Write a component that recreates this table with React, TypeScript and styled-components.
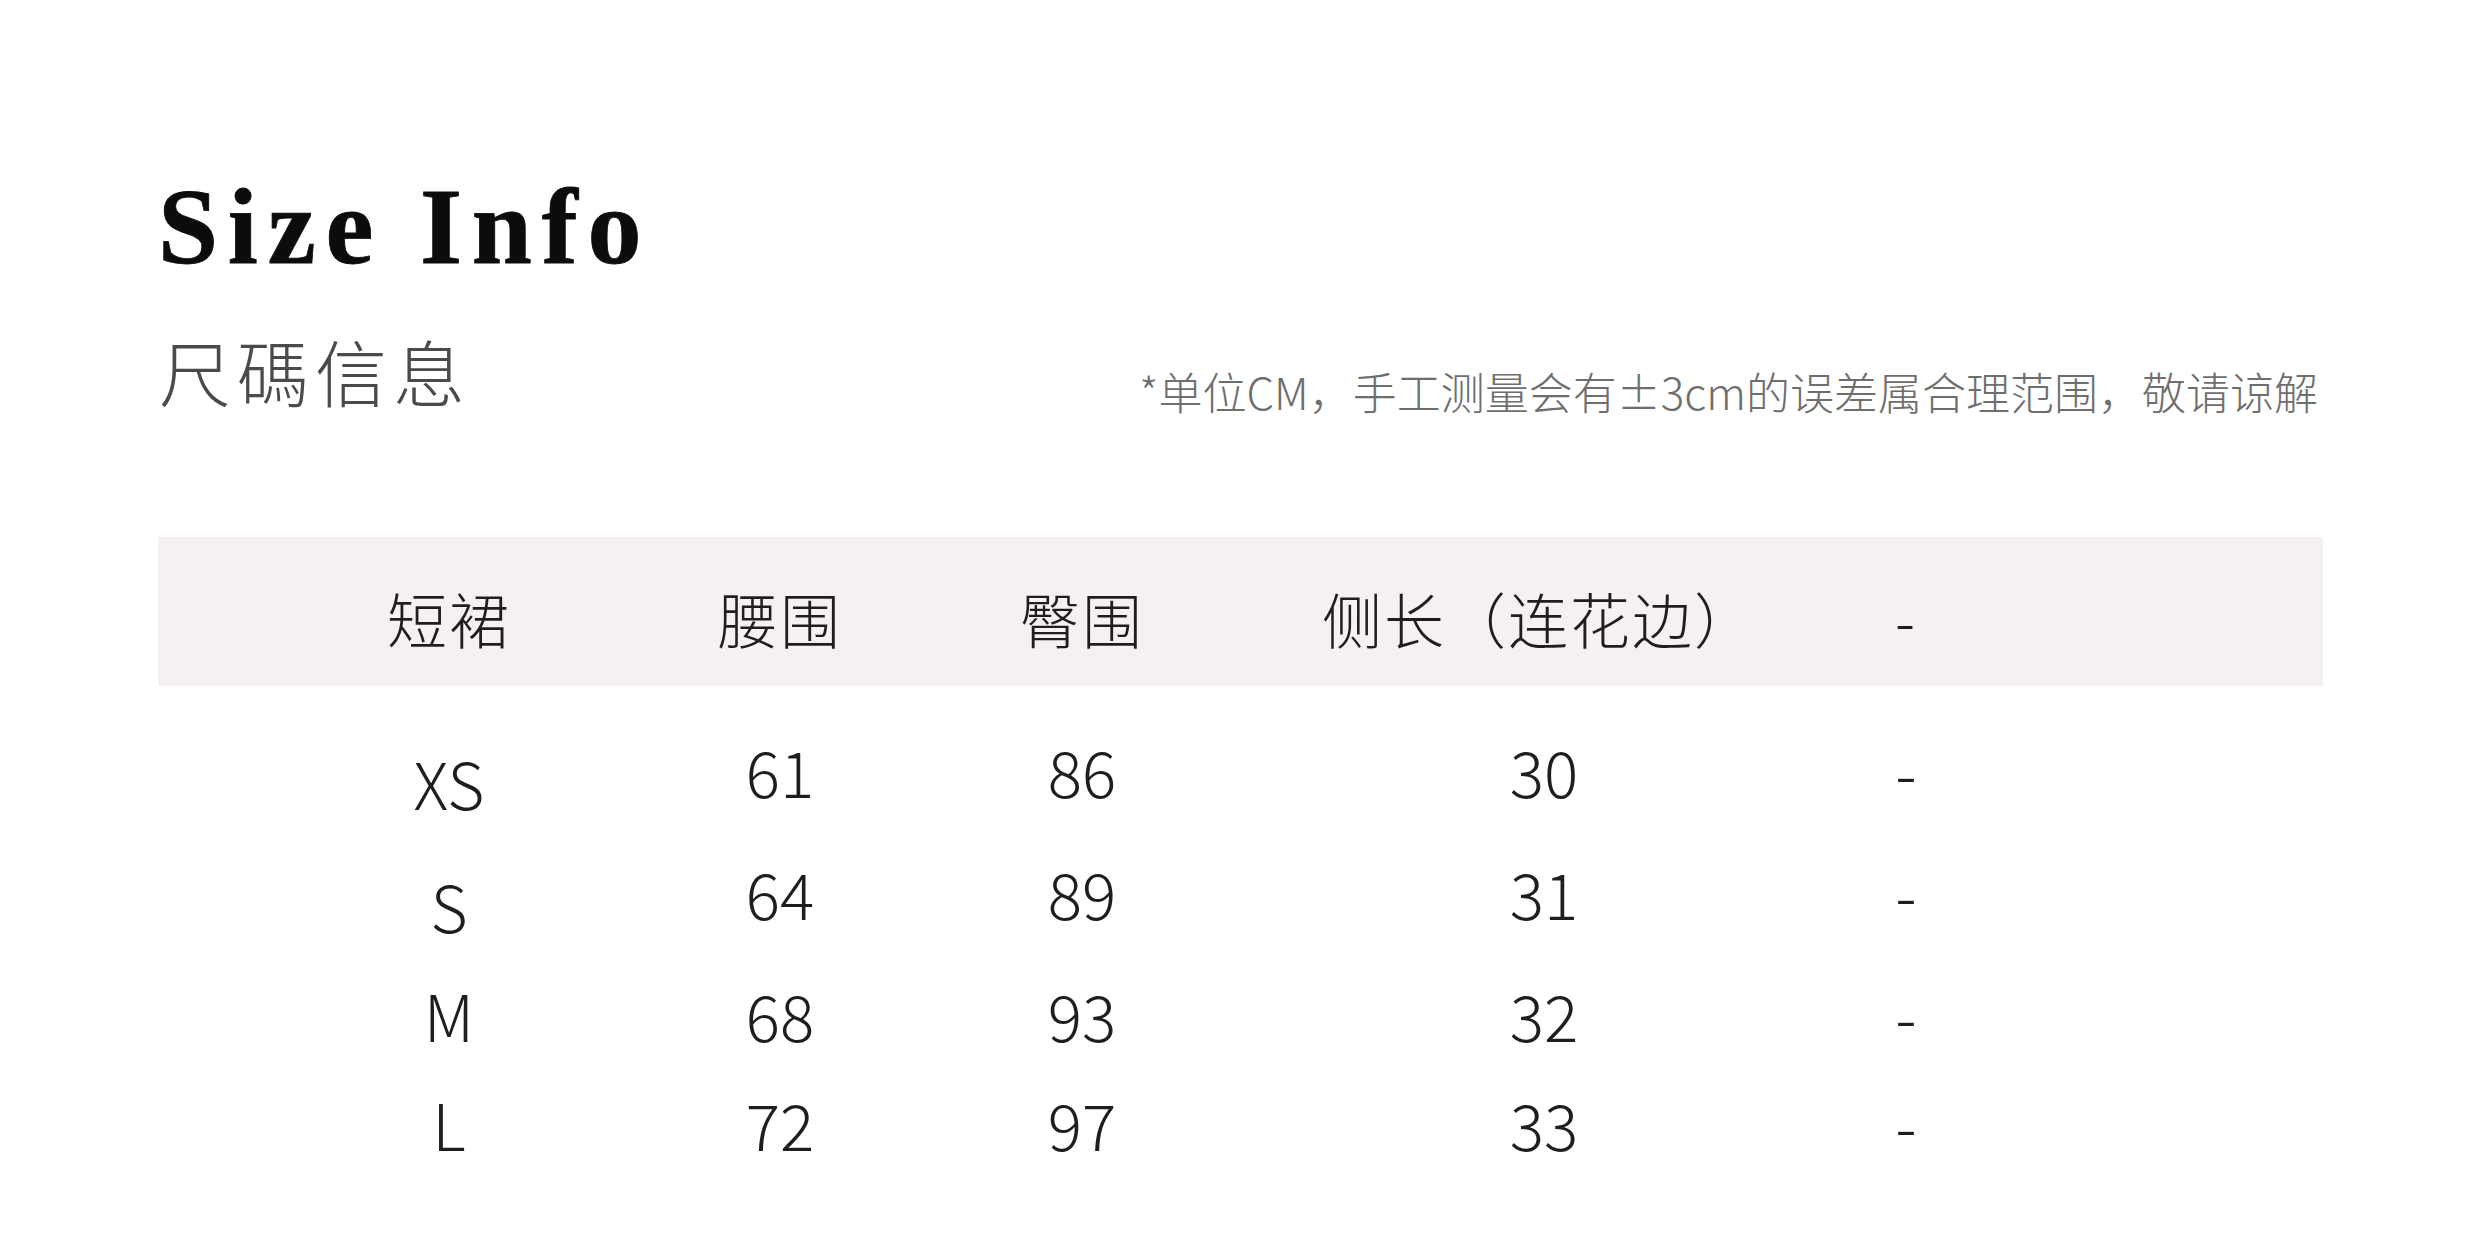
import { FC } from 'react'
import styled, { createGlobalStyle } from 'styled-components'

const GlobalStyle = createGlobalStyle`
  html, body {
    margin: 0;
    padding: 0;
    background: #ffffff;
  }
  body {
    width: 2480px;
    height: 1248px;
    overflow: hidden;
  }
`

const CJK = `"Noto Sans CJK SC", "Noto Sans", sans-serif`

const columns = ['短裙', '腰围', '臀围', '侧长（连花边）', '-']

const rows = [
  { size: 'XS', values: ['61', '86', '30', '-'], height: 123, drop: 12 },
  { size: 'S', values: ['64', '89', '31', '-'], height: 122, drop: 13 },
  { size: 'M', values: ['68', '93', '32', '-'], height: 122, drop: 0 },
  { size: 'L', values: ['72', '97', '33', '-'], height: 96, drop: 0 }
]

const App: FC = () => {
  return (
    <Page>
      <GlobalStyle />
      <Title>Size Info</Title>
      <SubRow>
        <SubTitle>尺碼信息</SubTitle>
        <Note>*单位CM，手工测量会有±3cm的误差属合理范围，敬请谅解</Note>
      </SubRow>
      <HeadBand>
        {columns.map((col, i) => (
          <HeadCell key={col + i} $shift={i === 3 ? 18 : 0}>
            {col}
          </HeadCell>
        ))}
      </HeadBand>
      <Body>
        {rows.map((row) => (
          <Row key={row.size} $h={row.height}>
            <Cell $drop={row.drop}>{row.size}</Cell>
            {row.values.map((v, i) => (
              <Cell key={i} $shift={i === 2 ? 28 : 0}>
                {v}
              </Cell>
            ))}
          </Row>
        ))}
      </Body>
    </Page>
  )
}

const Page = styled.div`
  width: 2480px;
  height: 1248px;
  box-sizing: border-box;
  padding: 173px 157px 0 158px;
  display: flex;
  flex-direction: column;
`

const Title = styled.div`
  font-family: 'Liberation Serif', 'Times New Roman', serif;
  font-weight: bold;
  font-size: 108px;
  line-height: 107px;
  letter-spacing: 9.8px;
  color: #0c0c0c;
  -webkit-text-stroke: 0.8px #0c0c0c;
`

const SubRow = styled.div`
  display: flex;
  flex-direction: row;
  justify-content: space-between;
  align-items: flex-end;
  margin-top: 54px;
`

const SubTitle = styled.div`
  font-family: ${CJK};
  font-weight: 300;
  font-size: 72px;
  line-height: 72px;
  letter-spacing: 6px;
  color: #4a4a4a;
  margin-left: 1px;
`

const Note = styled.div`
  font-family: ${CJK};
  font-weight: 300;
  font-size: 44px;
  line-height: 44px;
  color: #6e6e6e;
  margin-right: 5px;
  margin-bottom: -7px;
`

const grid = `
  display: grid;
  grid-template-columns: 300px 362px 242px 654px 98px 1fr;
  padding-left: 141px;
  justify-items: center;
  align-items: center;
`

const HeadBand = styled.div`
  ${grid}
  margin-top: 131px;
  height: 149px;
  background: #f7f0f0;
`

const HeadCell = styled.div<{ $shift?: number }>`
  font-family: ${CJK};
  font-weight: 300;
  font-size: 60px;
  line-height: 60px;
  letter-spacing: 2px;
  color: #1e1e1e;
  padding-top: 12px;
  padding-left: ${(p) => p.$shift ?? 0}px;
  white-space: nowrap;
`

const Body = styled.div`
  display: flex;
  flex-direction: column;
  padding-top: 22px;
`

const Row = styled.div<{ $h: number }>`
  ${grid}
  height: ${(p) => p.$h}px;
`

const Cell = styled.div<{ $drop?: number; $shift?: number }>`
  font-family: ${CJK};
  font-weight: 300;
  font-size: 64px;
  line-height: 64px;
  color: #1e1e1e;
  white-space: nowrap;
  padding-top: ${(p) => (p.$drop ?? 0) * 2}px;
  padding-left: ${(p) => p.$shift ?? 0}px;
`

export default App
